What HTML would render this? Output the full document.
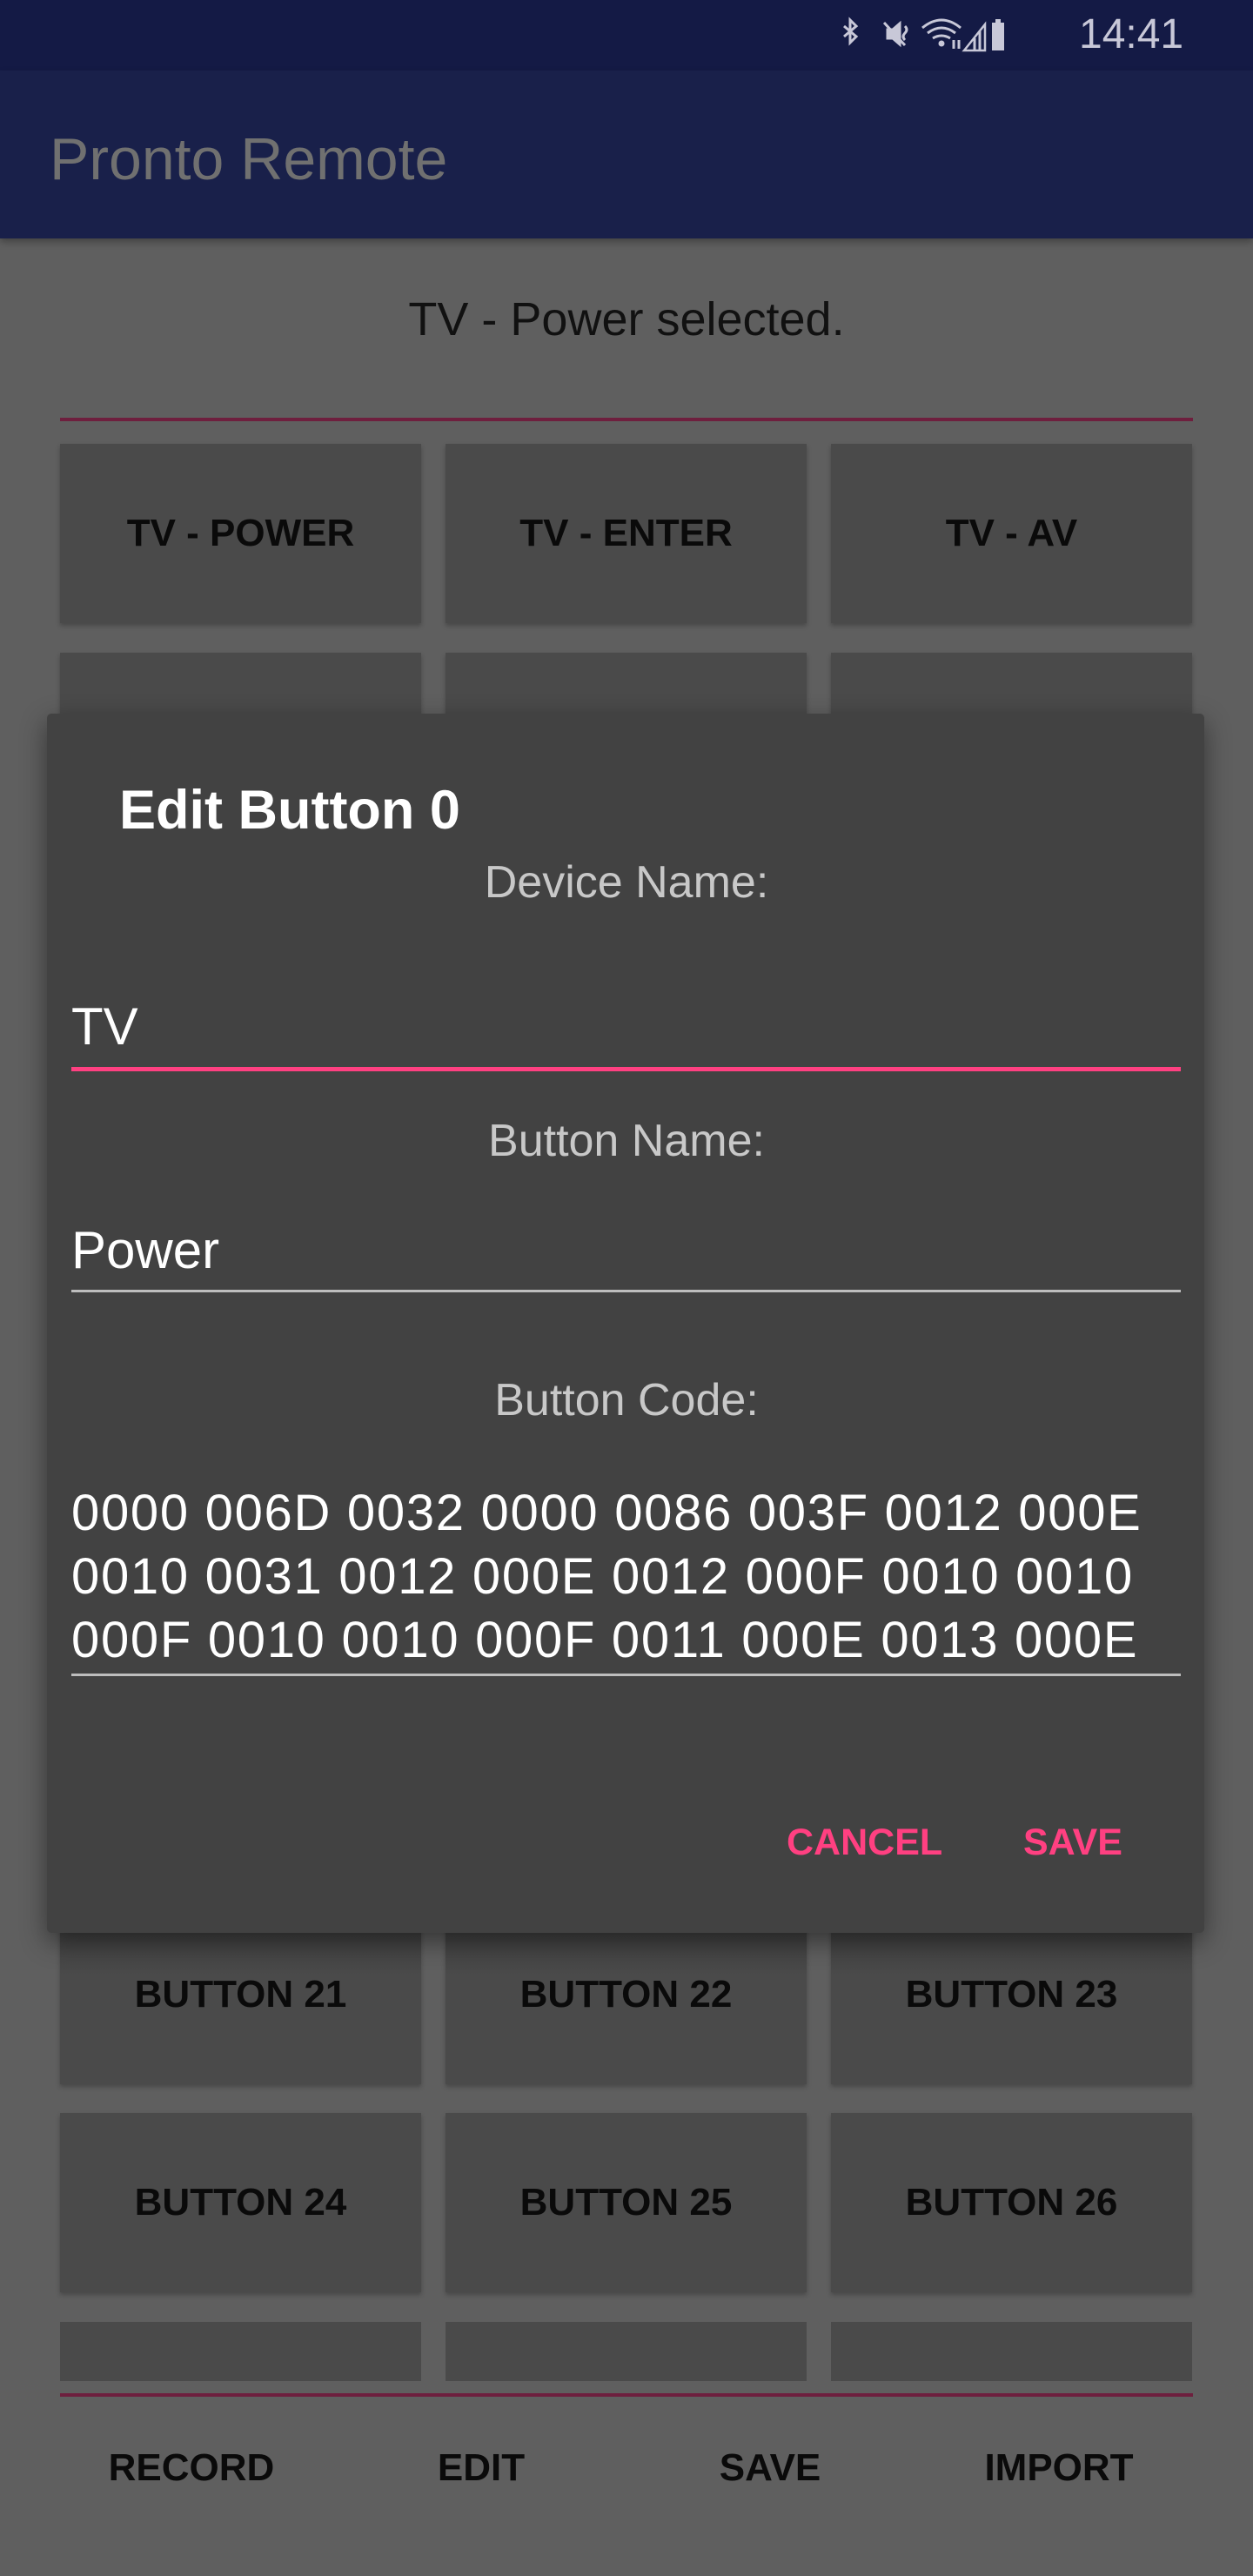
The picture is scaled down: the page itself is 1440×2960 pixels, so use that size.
<!DOCTYPE html>
<html><head><meta charset="utf-8"><style>
*{margin:0;padding:0;box-sizing:border-box}
body{width:1440px;height:2960px;background:#5f5f5f;position:relative;overflow:hidden;font-family:"Liberation Sans",sans-serif}
.sb{position:absolute;left:0;top:0;width:1440px;height:81px;background:#141a45}
.ab{position:absolute;left:0;top:81px;width:1440px;height:193px;background:#19204a;box-shadow:0 4px 8px rgba(0,0,0,.3)}
.t{position:absolute;white-space:pre;line-height:1}
.btn{position:absolute;width:415px;height:206px;background:#4a4a4a;box-shadow:0 3px 5px rgba(0,0,0,.25);display:flex;align-items:center;justify-content:center;font-weight:bold;font-size:44px;color:#0a0a0a}
.div{position:absolute;left:69px;width:1302px;height:4px;background:#6e1f3e}
.dlg{position:absolute;left:54px;top:820px;width:1330px;height:1401px;background:#424242;border-radius:5px;box-shadow:0 10px 30px rgba(0,0,0,.45)}
</style></head><body>
<div class="sb">
<svg style="position:absolute;left:960px;top:14px" width="240" height="54" viewBox="0 0 240 46" fill="none" stroke="#c8c8d8" stroke-width="3">
<path d="M10 12 L24 24 L17 31 V5 L24 12 L10 24"/>
<path d="M60 16 H66 L74 9 V33 L66 26 H60 Z" fill="#c8c8d8"/><path d="M56 8 L80 34"/><path d="M80 12 q4 4 0 8 q-4 4 0 8"/>
<path d="M100 14 q22 -18 44 0 M106 20 q16 -12 32 0 M112 26 q10 -6 20 0"/><circle cx="122" cy="32" r="2" fill="#c8c8d8"/><path d="M136 28 v10 M142 38 v-10"/>
<path d="M148 40 L172 10 V40 Z" fill="none" stroke-width="2.5"/><path d="M160 40 V26 M166 40 V18" />
<rect x="180" y="8" width="14" height="32" fill="#c8c8d8" stroke="none"/><rect x="184" y="4" width="6" height="5" fill="#c8c8d8" stroke="none"/>
</svg>
<div class="t" style="left:1240px;top:16px;font-size:48px;color:#c8c8d8">14:41</div>
</div>
<div class="ab"><div class="t" style="left:57px;top:68px;font-size:68px;color:#707070">Pronto Remote</div></div>
<div class="t" style="left:0;width:1440px;text-align:center;top:340px;font-size:54px;color:#111">TV - Power selected.</div>
<div class="div" style="top:480px"></div>

<div class="btn" style="left:69px;top:510px">TV - POWER</div>
<div class="btn" style="left:512px;top:510px">TV - ENTER</div>
<div class="btn" style="left:955px;top:510px">TV - AV</div>
<div class="btn" style="left:69px;top:750px"></div>
<div class="btn" style="left:512px;top:750px"></div>
<div class="btn" style="left:955px;top:750px"></div>
<div class="btn" style="left:69px;top:2189px;background:linear-gradient(#3c3c3c,#4a4a4a 40%)">BUTTON 21</div>
<div class="btn" style="left:512px;top:2189px;background:linear-gradient(#3c3c3c,#4a4a4a 40%)">BUTTON 22</div>
<div class="btn" style="left:955px;top:2189px;background:linear-gradient(#3c3c3c,#4a4a4a 40%)">BUTTON 23</div>
<div class="btn" style="left:69px;top:2428px">BUTTON 24</div>
<div class="btn" style="left:512px;top:2428px">BUTTON 25</div>
<div class="btn" style="left:955px;top:2428px">BUTTON 26</div>
<div class="btn" style="left:69px;top:2668px;height:68px;box-shadow:none"></div>
<div class="btn" style="left:512px;top:2668px;height:68px;box-shadow:none"></div>
<div class="btn" style="left:955px;top:2668px;height:68px;box-shadow:none"></div>
<div class="div" style="top:2750px"></div>
<div class="t" style="left:120px;width:200px;text-align:center;top:2814px;font-size:44px;font-weight:bold;color:#0a0a0a">RECORD</div>
<div class="t" style="left:453px;width:200px;text-align:center;top:2814px;font-size:44px;font-weight:bold;color:#0a0a0a">EDIT</div>
<div class="t" style="left:785px;width:200px;text-align:center;top:2814px;font-size:44px;font-weight:bold;color:#0a0a0a">SAVE</div>
<div class="t" style="left:1117px;width:200px;text-align:center;top:2814px;font-size:44px;font-weight:bold;color:#0a0a0a">IMPORT</div>

<div class="dlg"></div>
<div class="t" style="left:137px;top:900px;font-size:63px;font-weight:bold;color:#fff">Edit Button 0</div>
<div class="t" style="left:0;width:1440px;text-align:center;top:988px;font-size:52px;color:#c8c8c8">Device Name:</div>
<div class="t" style="left:82px;top:1150px;font-size:60px;color:#fff">TV</div>
<div style="position:absolute;left:82px;top:1226px;width:1275px;height:5px;background:#ff4081"></div>
<div class="t" style="left:0;width:1440px;text-align:center;top:1285px;font-size:52px;color:#c8c8c8">Button Name:</div>
<div class="t" style="left:82px;top:1407px;font-size:60px;color:#fff">Power</div>
<div style="position:absolute;left:82px;top:1482px;width:1275px;height:3px;background:#bdbdbd"></div>
<div class="t" style="left:0;width:1440px;text-align:center;top:1583px;font-size:52px;color:#c8c8c8">Button Code:</div>
<div class="t" style="left:82px;top:1702px;font-size:58px;line-height:73px;color:#fff;letter-spacing:1.7px">0000 006D 0032 0000 0086 003F 0012 000E
0010 0031 0012 000E 0012 000F 0010 0010
000F 0010 0010 000F 0011 000E 0013 000E</div>
<div style="position:absolute;left:82px;top:1923px;width:1275px;height:3px;background:#bdbdbd"></div>
<div class="t" style="left:904px;top:2096px;font-size:43px;font-weight:bold;color:#ff4081">CANCEL</div>
<div class="t" style="left:1176px;top:2096px;font-size:43px;font-weight:bold;color:#ff4081">SAVE</div>
</body></html>
